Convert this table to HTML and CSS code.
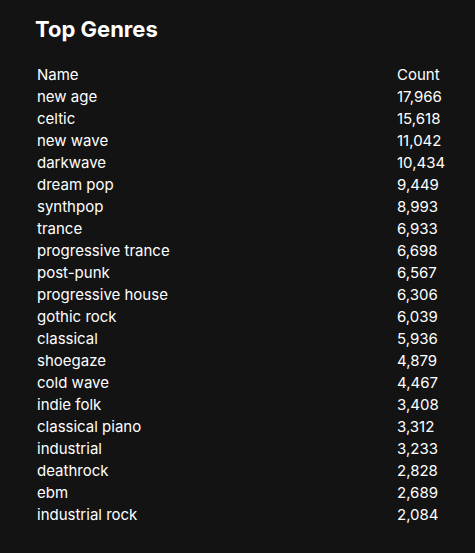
FILE: index.html
```html
<!DOCTYPE html>
<html>
<head>
<meta charset="utf-8">
<link rel="stylesheet" href="styles.css">
</head>
<body>
<div class="panel">
  <h1 class="title">Top Genres</h1>
  <table class="genres">
    <thead>
      <tr><th class="name">Name</th><th class="count">Count</th></tr>
    </thead>
    <tbody>
      <tr><td class="name">new age</td><td class="count">17,966</td></tr>
      <tr><td class="name">celtic</td><td class="count">15,618</td></tr>
      <tr><td class="name">new wave</td><td class="count">11,042</td></tr>
      <tr><td class="name">darkwave</td><td class="count">10,434</td></tr>
      <tr><td class="name">dream pop</td><td class="count">9,449</td></tr>
      <tr><td class="name">synthpop</td><td class="count">8,993</td></tr>
      <tr><td class="name">trance</td><td class="count">6,933</td></tr>
      <tr><td class="name">progressive trance</td><td class="count">6,698</td></tr>
      <tr><td class="name">post-punk</td><td class="count">6,567</td></tr>
      <tr><td class="name">progressive house</td><td class="count">6,306</td></tr>
      <tr><td class="name">gothic rock</td><td class="count">6,039</td></tr>
      <tr><td class="name">classical</td><td class="count">5,936</td></tr>
      <tr><td class="name">shoegaze</td><td class="count">4,879</td></tr>
      <tr><td class="name">cold wave</td><td class="count">4,467</td></tr>
      <tr><td class="name">indie folk</td><td class="count">3,408</td></tr>
      <tr><td class="name">classical piano</td><td class="count">3,312</td></tr>
      <tr><td class="name">industrial</td><td class="count">3,233</td></tr>
      <tr><td class="name">deathrock</td><td class="count">2,828</td></tr>
      <tr><td class="name">ebm</td><td class="count">2,689</td></tr>
      <tr><td class="name">industrial rock</td><td class="count">2,084</td></tr>
    </tbody>
  </table>
</div>
</body>
</html>
```
FILE: styles.css
```css
html, body {
  margin: 0;
  padding: 0;
  background: #131313;
  color: #ffffff;
  font-family: Inter, "Helvetica Neue", Arial, sans-serif;
}
.panel {
  padding: 16px 10px 16px 35px;
}
.title {
  margin: 0 0 21px 0;
  font-size: 22px;
  line-height: 27px;
  font-weight: 700;
}
.genres {
  border-collapse: collapse;
  font-size: 15px;
}
.genres th, .genres td {
  padding: 0 2px;
  height: 22px;
  line-height: 22px;
  font-weight: 400;
  text-align: left;
  white-space: nowrap;
}
.genres .name {
  width: 356px;
}
```
